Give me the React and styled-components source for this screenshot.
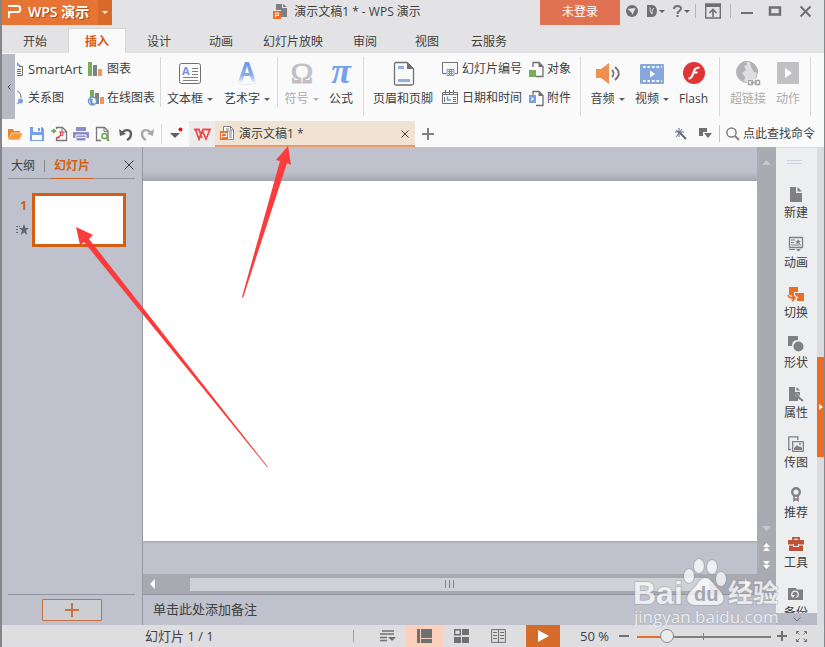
import React from "react";
import styled, { createGlobalStyle } from "styled-components";

const Global = createGlobalStyle`
  * { box-sizing: border-box; }
  body { margin: 0; background: #fafafa; overflow: hidden; }
  body, button, input { font-family: "Open Sans", "Noto Sans CJK SC", sans-serif; font-size: 12px; color: #404040; }
  button { border: 0; padding: 0; background: none; white-space: nowrap; line-height: 16px; cursor: pointer; }
  svg { display: block; flex: none; overflow: visible; }
`;

const Window = styled.div`
  position: relative;
  display: flex;
  flex-direction: column;
  height: 100vh;
  border-left: 2px solid #85868a;
  border-right: 1px solid #85868a;
  background: #fafafa;
  line-height: 16px;
`;

const Spacer = styled.div`
  flex: 1;
`;

const Divider = styled.span`
  flex: none;
  align-self: ${(p) => (p.$top ? "flex-start" : "center")};
  width: 1px;
  height: ${(p) => p.$h}px;
  margin: ${(p) => p.$m || "0"};
  background: ${(p) => p.$c || "#d9d9db"};
`;

/* Title bar */
const TitleBar = styled.header`
  display: flex;
  align-items: stretch;
  height: 25px;
  flex: none;
  background: #e3e3e5;
`;

const Brand = styled.button`
  display: flex;
  align-items: center;
  gap: 6px;
  width: 96px;
  padding: 0 0 2px 5px;
  background: #e67434;
  color: #fff;
  font-size: 14px;
  font-weight: 600;
  text-shadow: 1px 1px 0 #a9501c;
`;

const BrandMenu = styled.button`
  display: flex;
  align-items: center;
  justify-content: center;
  width: 14px;
  background: #da6a2c;
`;

const Caption = styled.h1`
  display: flex;
  flex: 1;
  align-items: center;
  justify-content: center;
  gap: 6px;
  margin: 0;
  padding: 0 0 2px 42px;
  font-size: 12px;
  font-weight: 400;
  white-space: nowrap;
`;

const Login = styled.button`
  width: 80px;
  padding-bottom: 2px;
  background: #e07153;
  color: #fff;
`;

const IconButton = styled.button`
  display: flex;
  flex: none;
  align-items: center;
  justify-content: center;
  gap: 2px;
  width: ${(p) => p.$w}px;
  height: ${(p) => p.$h || 22}px;
  background: ${(p) => p.$bg || "none"};
`;

/* Ribbon tabs */
const Tabs = styled.nav`
  display: flex;
  align-items: flex-end;
  height: 28px;
  flex: none;
  background: #e3e3e5;
`;

const Tab = styled.button`
  width: ${(p) => p.$w}px;
  height: 25px;
  padding-top: 2px;
  border: solid ${(p) => (p.$on ? "#d6d6d8" : "transparent")};
  border-width: 1px 1px 0;
  background: ${(p) => (p.$on ? "#fafafa" : "none")};
  color: ${(p) => (p.$on ? "#d8590f" : "#404040")};
  font-weight: ${(p) => (p.$on ? 700 : 400)};
`;

/* Ribbon */
const Ribbon = styled.div`
  display: flex;
  align-items: flex-start;
  height: 67px;
  flex: none;
  overflow: hidden;
`;

const RibbonScroll = styled.button`
  display: flex;
  align-items: center;
  justify-content: center;
  width: 13px;
  height: 65px;
  margin-top: 1px;
  background: #b7bac4;
`;

const Stack = styled.div`
  display: grid;
  grid-template-rows: 28px 30px;
  width: ${(p) => p.$w}px;
  flex: none;
  padding-top: 2px;
`;

const SmallTool = styled.button`
  display: flex;
  align-items: center;
  gap: ${(p) => p.$gap || 4}px;
  font-size: ${(p) => (p.$latin ? 13 : 12)}px;
`;

const BigTool = styled.button`
  display: flex;
  flex: none;
  flex-direction: column;
  align-items: center;
  gap: 4px;
  width: ${(p) => p.$w}px;
  padding-top: 8px;
  color: ${(p) => (p.disabled ? "#aaaaac" : "#404040")};
`;

const ToolLabel = styled.span`
  display: flex;
  align-items: center;
  gap: 4px;
`;

/* Quick access and document tabs */
const QuickBar = styled.div`
  display: flex;
  align-items: center;
  height: 27px;
  flex: none;
  padding-left: 1px;
`;

const HomeTab = styled(IconButton)`
  align-self: flex-end;
  height: 26px;
  background: #ececee;
`;

const DocTab = styled.div`
  display: flex;
  align-items: center;
  align-self: flex-end;
  width: 200px;
  height: 26px;
  padding: 1px 5px 0;
  border-bottom: 2px solid #e9986a;
  background: #f1e3d3;
`;

const DocName = styled.button`
  display: flex;
  flex: 1;
  align-items: center;
  gap: 4px;
`;

const Search = styled.button`
  display: flex;
  align-items: center;
  gap: 4px;
  padding: 0 9px 0 6px;
`;

/* Work area */
const Work = styled.main`
  display: flex;
  flex: 1;
  min-height: 0;
`;

const Outline = styled.aside`
  display: flex;
  flex-direction: column;
  width: 141px;
  flex: none;
  padding: 3px 7px 4px 6px;
  border-right: 1px solid #9698a2;
  background: #bfc2cc;
`;

const OutlineHead = styled.div`
  display: flex;
  align-items: stretch;
  height: 29px;
  flex: none;
  border-bottom: 1px solid #9395a0;
`;

const OutlineTab = styled.button`
  width: ${(p) => p.$w}px;
  padding-top: 4px;
  margin-bottom: -1px;
  border-bottom: 1px solid ${(p) => (p.$on ? "#d45f12" : "transparent")};
  color: ${(p) => (p.$on ? "#d45f12" : "#404040")};
  font-weight: ${(p) => (p.$on ? 700 : 400)};
`;

const SlideItem = styled.div`
  display: flex;
  flex: 1;
  align-items: flex-start;
  gap: 3px;
  padding: 14px 0 0 7px;
`;

const SlideMarks = styled.div`
  display: flex;
  flex-direction: column;
  align-items: flex-end;
  gap: 10px;
  width: 14px;
  padding: 5px 0 0;
  color: #d45f12;
  font-weight: 700;

  span { padding-right: 2px; }
`;

const Thumb = styled.button`
  width: 94px;
  height: 54px;
  border: 3px solid #d45f12;
  background: #fff;
`;

const OutlineFoot = styled.div`
  display: flex;
  justify-content: center;
  padding-top: 4px;
  border-top: 1px solid #9395a0;
`;

const AddSlide = styled.button`
  display: flex;
  align-items: center;
  justify-content: center;
  width: 60px;
  height: 22px;
  border: 1px solid #c87040;
  border-radius: 1px;
  background: #cdced2;
`;

const Editor = styled.section`
  display: flex;
  flex: 1;
  flex-direction: column;
  min-width: 0;
  background: #bfc2cc;
`;

const Stage = styled.div`
  display: flex;
  flex: 1;
  min-height: 0;
`;

const Canvas = styled.div`
  display: flex;
  flex: 1;
  padding: 34px 0 33px;
  background: linear-gradient(#bfc2cc 24px, #a6a8b0 34px, #bfc2cc 34px);
`;

const Slide = styled.div`
  flex: 1;
  background: #fff;
  box-shadow: 0 1px 2px #9b9da6;
`;

const VScroll = styled.div`
  display: flex;
  flex-direction: column;
  align-items: center;
  width: 19px;
  padding: 4px 0 0;
  background: #a9aab2;
`;

const HScroll = styled.div`
  display: flex;
  align-items: center;
  height: 21px;
  flex: none;
  padding-right: 19px;
  border-bottom: 1px solid #9395a0;
  background: #a9a9b1;
`;

const HThumb = styled.button`
  display: flex;
  align-items: center;
  justify-content: center;
  flex: 1;
  height: 13px;
  margin: 0 28px;
  background: #d0d1d5;
`;

const Notes = styled.button`
  height: 30px;
  flex: none;
  padding: 0 10px 3px;
  font-size: 13px;
  text-align: left;
`;

const TaskBar = styled.aside`
  display: flex;
  flex-direction: column;
  align-items: stretch;
  width: 41px;
  flex: none;
  background: #edeef0;
  border-top: 1px solid #dcdce0;
`;

const Grip = styled.div`
  width: 15px;
  height: 4px;
  margin: 12px auto 17px 11px;
  flex: none;
  border: solid #cfd2dc;
  border-width: 1px 0;
`;

const TaskList = styled.div`
  flex: 1;
  min-height: 0;
  overflow: hidden;
`;

const Task = styled.button`
  display: flex;
  flex-direction: column;
  align-items: center;
  gap: 3px;
  width: 100%;
  height: 50px;
  padding: 5px 1px 0 0;
`;

const TaskMore = styled.button`
  display: flex;
  align-items: center;
  justify-content: center;
  height: 12px;
  flex: none;
  background: #b7bac4;
`;

const Rail = styled.div`
  width: 7px;
  flex: none;
  padding-top: 210px;
  background: #dcdce0;
`;

const RailHandle = styled.button`
  display: flex;
  align-items: center;
  width: 7px;
  height: 100px;
  padding-left: 2px;
  background: #ea6d24;
`;

/* Status bar */
const StatusBar = styled.footer`
  display: flex;
  align-items: center;
  height: 22px;
  flex: none;
  padding: 0 12px 0 143px;
  background: #dedee0;
  font-size: 13px;
  white-space: nowrap;
`;

const ZoomValue = styled.span`
  width: 56px;
  padding-left: 20px;
`;

const Zoom = styled.input`
  appearance: none;
  width: 134px;
  height: 16px;
  margin: 0 3px 0 5px;
  background:
    linear-gradient(#808082, #808082) 66px 5px / 1px 7px no-repeat,
    linear-gradient(90deg, #ea6d24 24px, #808082 24px) 0 8px / 100% 2px no-repeat;

  &::-webkit-slider-thumb {
    appearance: none;
    width: 14px;
    height: 14px;
    border: 1px solid #88888a;
    border-radius: 50%;
    background: #ececee;
  }
`;

const Overlay = styled.svg`
  position: absolute;
  top: 0;
  left: -2px;
  pointer-events: none;
`;

const G = "#707072";

const Svg = ({ w = 16, h = w, children }) => (
  <svg width={w} height={h} viewBox={`0 0 ${w} ${h}`} fill="none" aria-hidden="true">{children}</svg>
);
const Caret = ({ c = "#606062", w = 6 }) => (
  <Svg w={w} h={3}><path d={`M0 0H${w}L${w / 2} 3Z`} fill={c} /></Svg>
);
const Cross = ({ s = 9, c = "#404040", t = 1 }) => (
  <Svg w={s}><path d={`M.5 .5L${s - 0.5} ${s - 0.5}M${s - 0.5} .5L.5 ${s - 0.5}`} stroke={c} strokeWidth={t} /></Svg>
);
const Plus = ({ s = 12, c = "#808082", t = 2 }) => (
  <Svg w={s}><path d={`M0 ${s / 2}H${s}M${s / 2} 0V${s}`} stroke={c} strokeWidth={t} /></Svg>
);
const DocIcon = () => (
  <Svg w={15} h={15}>
    <path d="M3.5 5V.5h7l3 3v10h-5" fill="#fff" stroke="#808082" />
    <path d="M10.5 0v4H14M6 3h3M6 5h6M9 7h3M9 9h3M9 11h3" stroke="#808082" />
    <path d="M0 5h8v9H0z" fill="#e67434" />
    <path d="M1.500 12V7.500h5v3h-4" stroke="#fff" />
  </Svg>
);

const tabs = [["开始", 66], ["插入", 58], ["设计", 66], ["动画", 58], ["幻灯片放映", 86], ["审阅", 58], ["视图", 66], ["云服务", 58]];

const Small = ({ icon, children, gap, latin }) => <SmallTool $gap={gap} $latin={latin}>{icon}{children}</SmallTool>;
const Big = ({ w, icon, label, menu, disabled }) => (
  <BigTool $w={w} disabled={disabled}>
    <Svg w={26}>{icon}</Svg>
    <ToolLabel>{label}{menu && <Caret c={disabled ? "#b0b0b2" : "#606062"} />}</ToolLabel>
  </BigTool>
);

const folded = <><path d="M4 5V.5h6l4 4v10H7" stroke={G} strokeWidth="1.3" /><path d="M9.500 0v5H14.500Z" fill={G} /></>;

const quick = [
  [23, "打开", <><path d="M1 14V3h5l1 2h6v3H5z" fill="#e8852b" /><path d="M4.500 7H16L12.500 14H1z" fill="#f79a3b" stroke="#fafafa" strokeWidth=".6" /></>],
  [22, "保存", <><path d="M1 1h12l2 2v12H1z" fill="#76a0ea" /><path d="M4 1h8v5H4zM3 9h10v5H3z" fill="#fafafa" /><path d="M9 2h2v3H9z" fill="#76a0ea" /></>],
  [22, "输出为PDF", <><path d="M5.500 3V1.500h6l4 4v9h-10V11" stroke="#77777a" strokeWidth="1.3" /><path d="M11 1v5h4.500" stroke="#77777a" /><path d="M0 5h4M2 3l2.500 2L2 7" stroke="#6aa84f" strokeWidth="1.600" /><path d="M8 6h2.500c2 0 2 3.500 0 3.500H9.500c-1 0-1.500 3-3 2.500 0-2 3-1.500 3-2.500V6" stroke="#dd3f3f" strokeWidth="1.200" /></>],
  [22, "打印", <><path d="M3 1h10v4H3zM0 6h16v6H0z" fill="#8d8dc9" /><path d="M3 9h10v6H3z" fill="#8d8dc9" stroke="#fafafa" /><path d="M4 11.500h8" stroke="#fafafa" /></>],
  [22, "打印预览", <><path d="M6 14.500H1.500v-13h8l3.500 3.500v9h-1" stroke="#77777a" strokeWidth="1.300" /><path d="M9 1v4.500h4" stroke="#77777a" /><circle cx="9.500" cy="10" r="2.600" stroke="#6aa84f" strokeWidth="1.500" /><path d="M11.500 12l2.500 3" stroke="#6aa84f" strokeWidth="1.800" /></>],
  [23, "撤消", <><path d="M4 7C7 3 13 3 13 8c0 3-2 5-4 6" stroke="#606062" strokeWidth="2.400" /><path d="M1 3l1 7 6-2z" fill="#606062" /></>],
  [22, "恢复", <><path d="M11 7C8 3 2 3 2 8c0 3 2 5 4 6" stroke="#a9a9ab" strokeWidth="2.400" /><path d="M14 3l-1 7-6-2z" fill="#a9a9ab" /></>],
];

const S = "#808082";
const tasks = [
  ["新建", <><path d="M2 1h6v6h6v9H2zM9.500 1l4.500 4.500H9.500z" fill={S} /></>],
  ["动画", <><path d="M1.500 1.500h13v10h-13z" stroke={S} strokeWidth="1.300" /><path d="M3 4h4M3 6.500h3M3 9h10M1 13.500h6" stroke={S} /><path d="M10 3l1 1.700 2 .2-1.500 1.300.5 2-2-1-1.800 1 .5-2L7.500 5l1.800-.3z" fill={S} /><path d="M8 13h5l-2.500 2.500z" fill={S} /></>],
  ["切换", <><path d="M1 1h9v5H6v3H1zM7 7h9v8H9v-3h2l-4-3z" fill="#ea6d24" /><path d="M0 9c1 3 3 3 6 3M4 9l3 3-3 3" stroke="#ea6d24" strokeWidth="1.800" /></>],
  ["形状", <><path d="M0 0h10v4c-4 0-6 2-6 6H0z" fill={S} /><circle cx="10.500" cy="10.500" r="5" fill={S} /></>],
  ["属性", <><path d="M1 1h6v5h5v3L9 7 7 9l3 3v3H1zM8.500 1L12 4.500H8.500z" fill={S} /><path d="M8 8l2 3 5 4" stroke={S} strokeWidth="2" /><path d="M8 8h3v3" stroke={S} /></>],
  ["传图", <><path d="M3 13.500H.800V.800h9V4" stroke={S} strokeWidth="1.300" /><path d="M4.700 5.700h10.600v9.600H4.700z" stroke={S} strokeWidth="1.300" /><path d="M6 14v-2l3-3 2 2 1-1 2 2v2z" fill={S} /><circle cx="12" cy="8" r="1" fill={S} /></>],
  ["推荐", <><circle cx="8" cy="6" r="3.800" stroke={S} strokeWidth="2.400" /><path d="M6 10v4.500l2-1.500 2 1.500V10" stroke={S} strokeWidth="1.600" /></>],
  ["工具", <><path d="M5 4V1.800h6V4" stroke="#bd5238" strokeWidth="1.800" /><path d="M0 4h16v4.500H0zM1 9.500h14V15H1z" fill="#bd5238" /><path d="M5 8h6v3H5z" fill="#edeef0" /><path d="M6 8h4v2H6z" fill="#bd5238" /></>],
  ["备份", <><path d="M0 2h8l1 1.500h6V14H0z" fill={S} /><path d="M4.500 10.500a3.300 3.300 0 1 1 3.500 1" stroke="#edeef0" strokeWidth="1.300" /><path d="M3 9h4l-2 3z" fill="#edeef0" /></>],
];

export default function App() {
  return (
    <Window>
      <Global />
      <TitleBar>
        <Brand>
          <Svg w={15} h={13}><path d="M1 1h10c3 0 3 6 0 6H1M2 6v7" stroke="#fff" strokeWidth="2" /></Svg>
          WPS 演示
        </Brand>
        <BrandMenu aria-label="菜单"><Caret c="#fff" /></BrandMenu>
        <Caption>
          <Svg w={15} h={15}>
            <path d="M3 0h6v4h5v9H8V6H3zM10 0l4 3h-4z" fill={S} />
            <path d="M0 7h8v8H0z" fill="#ea6d24" /><path d="M2.500 13.500V9h3v2.500h-3" stroke="#fff" />
          </Svg>
          演示文稿1 * - WPS 演示
        </Caption>
        <Login>未登录</Login>
        <IconButton $w={24} aria-label="在线服务"><Svg w={12}><circle cx="6" cy="6" r="6" fill={G} /><path d="M1.500 3.500C4 4.500 5 2.500 10 3.500 8 5 8 8 6 10 6.500 7 4 7 1.500 3.500z" fill="#e3e3e5" /></Svg></IconButton>
        <IconButton $w={24} aria-label="皮肤"><Svg w={10} h={12}><path d="M0 0h5c6.500 0 6.500 12 0 12H0z" fill={G} /><path d="M3 2.500c0 3 .5 5 2 6.500 0-3 .5-5 2-6" stroke="#e3e3e5" /></Svg><Caret /></IconButton>
        <IconButton $w={26} aria-label="帮助"><Svg w={9} h={12}><path d="M1 4c0-4 7-4 7-.5C8 6 4.500 5.500 4.500 9M4.500 10v2" stroke={G} strokeWidth="2" /></Svg><Caret /></IconButton>
        <Divider $h={14} $c="#b5b5b7" $m="0 0 3px 1px" />
        <IconButton $w={34} aria-label="隐藏功能区"><Svg w={16}><path d="M.700 1h14.600v14H.700z" stroke={G} strokeWidth="1.400" /><path d="M0 1h16v3H0z" fill={G} /><path d="M8 14V7M4.500 10L8 6.500l3.500 3.500" stroke={G} strokeWidth="1.600" /></Svg></IconButton>
        <Divider $h={14} $c="#b5b5b7" $m="0 0 3px" />
        <IconButton $w={32} aria-label="最小化"><Svg w={12}><path d="M0 8h12" stroke={G} strokeWidth="2" /></Svg></IconButton>
        <IconButton $w={24} aria-label="最大化"><Svg w={12} h={10}><path d="M1 1.500h10v7H1z" stroke={G} strokeWidth="2.500" /></Svg></IconButton>
        <IconButton $w={37} aria-label="关闭"><Cross s={11} c={G} t={2} /></IconButton>
      </TitleBar>

      <Tabs>{tabs.map(([t, w]) => <Tab key={t} $w={w} $on={t === "插入"}>{t}</Tab>)}</Tabs>

      <Ribbon>
        <RibbonScroll aria-label="向左滚动"><Svg w={4} h={6}><path d="M3.500 .5L1 3l2.500 2.500" stroke="#505058" /></Svg></RibbonScroll>
        <Stack $w={73}>
          <Small latin icon={<Svg w={9} h={14}><path d="M4 4.500h3.500v9H2M2 7.500h4M2 9.500h4M2 11.500h4" stroke={G} /><path d="M2 0l4 4H2z" fill="#76a0ea" /></Svg>}>SmartArt</Small>
          <Small icon={<Svg w={9} h={14}><path d="M2 0c3 1 4 4 4 7M2 13l3-2" stroke={G} /><circle cx="5.500" cy="10" r="2.500" fill="#76a0ea" /></Svg>}>关系图</Small>
        </Stack>
        <Stack $w={72}>
          <Small gap={3} icon={<Svg w={16} h={14}><path d="M0 0h4v14H0z" fill="#78ab5e" /><path d="M5 3h4v11H5z" fill={S} /><path d="M10 7h4v7h-4z" fill="#ee9560" /></Svg>}>图表</Small>
          <Small gap={3} icon={<Svg w={16} h={16}><path d="M2 0h4v7H2z" fill="#78ab5e" /><path d="M7 3h4v11H7z" fill={S} /><path d="M12 7h4v7h-4z" fill="#ee9560" /><circle cx="4.500" cy="11" r="4" fill="#fff" stroke="#6d96cf" strokeWidth="1.400" /><path d="M1 8l4 1-1 3 3 2-4 1z" fill="#6d96cf" /></Svg>}>在线图表</Small>
        </Stack>
        <Divider $top $h={50} $m="4px 0 0" />
        <Big w={58} menu label="文本框" icon={<><rect x="2.500" y="2.500" width="21" height="20" rx="2" stroke={G} /><text x="5" y="14" fontFamily="Open Sans" fontWeight="700" fontSize="11" fill="#6d96dc">A</text><path d="M15 7.500h6M15 10.500h6M15 13.500h6M6 16.500h15M6 19.500h15" stroke={S} /></>} />
        <Big w={56} menu label="艺术字" icon={<><defs><linearGradient id="fade" x2="0" y2="1"><stop stopColor="#6f99e6" /><stop offset=".65" stopColor="#86abee" /><stop offset="1" stopColor="#e9effb" /></linearGradient></defs><path d="M4 21L11 1h4l7 20h-4l-2-6h-6l-2 6zM11 12h4l-2-7z" fill="url(#fade)" /><path d="M4 22c3 2 15 2 18 0" stroke="#e3ebf9" /></>} />
        <Divider $top $h={50} $m="4px 0 0 2px" />
        <Big w={47} menu disabled label="符号" icon={<text x="13" y="22" textAnchor="middle" fontFamily="Liberation Serif" fontSize="30" fill="#c1c1c3" stroke="#c1c1c3">Ω</text>} />
        <Big w={32} label="公式" icon={<text x="13" y="22" textAnchor="middle" fontFamily="Liberation Serif" fontSize="36" fontWeight="700" fontStyle="italic" fill="#76a0ea">π</text>} />
        <Divider $top $h={59} $m="4px 0 0 6px" />
        <Big w={78} label="页眉和页脚" icon={<><path d="M6 1.500h11l6.500 6.500v14.500c0 1-1 1.500-2 1.500H6c-1 0-1.500-1-1.500-1.500V3c0-1 .500-1.500 1.500-1.500z" stroke={G} strokeWidth="1.300" /><path d="M17 1v7h7z" fill={G} /><path d="M8 5h6v3H8zM8 18h12v3H8z" fill="#8fb0e6" /></>} />
        <Stack $w={87}>
          <Small icon={<Svg w={16}><path d="M4 12.500H.5v-11h15v11H13" stroke={G} /><path d="M5 8.500h7v6H5zM6 10.500h5M6 12.500h5M7.500 9v5M9.500 9v5" stroke="#6d96dc" /></Svg>}>幻灯片编号</Small>
          <Small icon={<Svg w={16}><path d="M.5 2.500h15v11H.5zM0 4.500h16" stroke={G} /><path d="M3.500 0v4M7.500 0v4M11.500 0v4M11 7.500h3M11 9.500h3M11 11.500h3M2.500 7v5" stroke={G} /><path d="M5.500 6.500V10H9" stroke="#6d96dc" strokeWidth="1.500" /></Svg>}>日期和时间</Small>
        </Stack>
        <Stack $w={51}>
          <Small gap={3} icon={<Svg w={15}>{folded}<path d="M0 8h7v7H0z" fill="#78ab5e" /></Svg>}>对象</Small>
          <Small gap={3} icon={<Svg w={15}>{folded}<path d="M0 4h7v8H0z" fill="#76a0ea" /><path d="M2.500 6v4L5 8z" fill="#fff" /></Svg>}>附件</Small>
        </Stack>
        <Divider $top $h={59} $m="4px 0 0" />
        <Big w={53} menu label="音频" icon={<><path d="M1 8h5l8-6v21l-8-6H1z" fill="#f09050" /><path d="M17 9c2 2 2 5 0 7M20 6c5 4 5 9 0 13" stroke={G} strokeWidth="1.800" /></>} />
        <Big w={36} menu label="视频" icon={<><rect x="1" y="3" width="24" height="20" rx="1" fill="#86a8dc" /><path d="M4 6h19M4 20h19" stroke="#fff" strokeWidth="2" strokeDasharray="2.500 2" /><path d="M11 9.500v7l5-3.500z" fill="#fff" /></>} />
        <Big w={47} label="Flash" icon={<><circle cx="13" cy="12" r="11" fill="#e03535" /><path d="M18.500 6.500c-5 0-5 3-6.500 6.500S10 17.500 7.500 17.500M12 11.500h4.500" stroke="#fff" strokeWidth="2.200" /></>} />
        <Divider $top $h={59} $m="4px 0 0 2px" />
        <Big w={56} disabled label="超链接" icon={<><circle cx="12" cy="11" r="10.500" fill="#dedee0" stroke="#b2b2b4" /><path d="M2 8c2-5 6-8 9-8l1 4-3 1 2 4-4 3 3 4-1 4C4 19 1 14 2 8zM15 1c5 1 8 6 8 11l-4-1-3-5z" fill="#b2b2b4" /><path d="M12 18h14v7H12z" fill="#fafafa" /><path d="M13.500 19.500h4v4h-4zM20.500 19.500h4v4h-4zM16 21.500h6" stroke="#a5a5a7" strokeWidth="1.400" /></>} />
        <Big w={24} disabled label="动作" icon={<><rect x="2" y="1" width="22" height="22" rx="1" fill="#c1c1c3" /><path d="M10 7v10l7-5z" fill="#fff" /></>} />
        <Divider $top $h={59} $m="4px 0 0 10px" />
      </Ribbon>

      <QuickBar>
        {quick.map(([w, label, icon]) => <IconButton key={label} $w={w} aria-label={label}><Svg w={16}>{icon}</Svg></IconButton>)}
        <Divider $h={20} $m="0 0 0 2px" />
        <IconButton $w={27} aria-label="自定义快速访问工具栏"><Svg w={14} h={14}><path d="M1 6h10l-5 5z" fill="#606062" /><circle cx="11.500" cy="2.500" r="2" fill="#f01010" /></Svg></IconButton>
        <HomeTab $w={26} aria-label="首页"><Svg w={17} h={13}><path d="M0 1.500h5L8 10M1.500 1.500L5 11 9 1.500h7L12 11 8.500 3" stroke="#ee4a4a" strokeWidth="1.800" /></Svg></HomeTab>
        <DocTab>
          <DocName><DocIcon />演示文稿1 *</DocName>
          <IconButton $w={11} aria-label="关闭文稿"><Cross s={8} /></IconButton>
        </DocTab>
        <IconButton $w={26} aria-label="新建文稿"><Plus /></IconButton>
        <Spacer />
        <IconButton $w={24} aria-label="魔法棒"><Svg w={13} h={13}><path d="M6 6l6 6" stroke="#606878" strokeWidth="2" /><path d="M5 1v9M2 3l7 5M8 2L2 10M1 5h9" stroke="#606878" /></Svg></IconButton>
        <IconButton $w={25} aria-label="窗口"><Svg w={13} h={11}><path d="M0 0h8v4H4v4H0z" fill={G} /><path d="M5 5h8L9 10z" fill={G} /></Svg></IconButton>
        <Divider $h={17} $m="0 0 0 1px" $c="#c5c5c7" />
        <Search><Svg w={13}><circle cx="5.500" cy="5.500" r="4.600" stroke={S} strokeWidth="1.500" /><path d="M9 9l4 4" stroke={S} strokeWidth="2" /></Svg>点此查找命令</Search>
      </QuickBar>

      <Work>
        <Outline>
          <OutlineHead>
            <OutlineTab $w={30}>大纲</OutlineTab>
            <Divider $h={12} $c="#85878f" $m="4px 6px 0" />
            <OutlineTab $w={42} $on>幻灯片</OutlineTab>
            <Spacer />
            <IconButton $w={12} $h={30} aria-label="关闭窗格"><Cross s={10} /></IconButton>
          </OutlineHead>
          <SlideItem>
            <SlideMarks>
              <span>1</span>
              <Svg w={13} h={12}><path d="M0 2.500h4M0 5.500h3M0 8.500h3" stroke="#606878" strokeDasharray="2 1" /><path d="M8 0l1.500 4H13l-3 2.500 1.300 4.500L8 8.500 4.700 11 6 6.500 3 4h3.500z" fill="#606878" /></Svg>
            </SlideMarks>
            <Thumb aria-label="幻灯片 1" />
          </SlideItem>
          <OutlineFoot><AddSlide aria-label="新建幻灯片"><Plus s={14} c="#c87040" /></AddSlide></OutlineFoot>
        </Outline>

        <Editor>
          <Stage>
            <Canvas><Slide /></Canvas>
            <VScroll>
              <IconButton $w={19} $h={22} aria-label="向上"><Svg w={9} h={5}><path d="M0 5l4.500-5L9 5z" fill="#c8c8ca" /></Svg></IconButton>
              <Spacer />
              <IconButton $w={19} $h={18} aria-label="向下"><Svg w={9} h={5}><path d="M0 0h9L4.500 5z" fill="#c8c8ca" /></Svg></IconButton>
              <IconButton $w={19} $h={19} aria-label="上一张"><Svg w={7} h={8}><path d="M0 4l3.500-4L7 4zM0 8l3.500-4L7 8z" fill="#fff" /></Svg></IconButton>
              <IconButton $w={19} $h={18} aria-label="下一张"><Svg w={7} h={8}><path d="M0 0h7L3.500 4zM0 4h7L3.500 8z" fill="#fff" /></Svg></IconButton>
            </VScroll>
          </Stage>
          <HScroll>
            <IconButton $w={19} $h={20} aria-label="向左"><Svg w={5} h={10}><path d="M5 0v10L0 5z" fill="#fff" /></Svg></IconButton>
            <HThumb aria-label="水平滚动"><Svg w={10} h={8}><path d="M.5 0v8M4.500 0v8M8.500 0v8" stroke={S} /></Svg></HThumb>
            <IconButton $w={20} $h={20} aria-label="向右"><Svg w={5} h={10}><path d="M0 0v10l5-5z" fill="#fff" /></Svg></IconButton>
          </HScroll>
          <Notes>单击此处添加备注</Notes>
        </Editor>

        <TaskBar>
          <Grip />
          <TaskList>{tasks.map(([t, icon]) => <Task key={t}><Svg w={16}>{icon}</Svg>{t}</Task>)}</TaskList>
          <TaskMore aria-label="更多"><Svg w={8} h={5}><path d="M.5 .5L4 4l3.500-3.500" stroke={G} /></Svg></TaskMore>
        </TaskBar>
        <Rail><RailHandle aria-label="展开任务窗格"><Svg w={4} h={6}><path d="M0 0v6l4-3z" fill="#fff" /></Svg></RailHandle></Rail>
      </Work>

      <StatusBar>
        <span>幻灯片 1 / 1</span>
        <Spacer />
        <Divider $h={12} $c="#a0a0a2" $m="0 15px 0 0" />
        <IconButton $w={37} aria-label="备注"><Svg w={16} h={12}><path d="M2 1h12M0 4h14M0 7.500h7M0 10.500h7" stroke={G} strokeWidth="1.300" /><path d="M8 7h8l-4 4z" fill={G} /></Svg></IconButton>
        <IconButton $w={37} $bg="#fbd0bd" aria-label="普通视图"><Svg w={15} h={14}><path d="M0 0h3v14H0zM4 0h11v9H4zM4 10h11v4H4z" fill={G} /></Svg></IconButton>
        <IconButton $w={37} aria-label="幻灯片浏览"><Svg w={15} h={14}><path d="M.700 .700h5.600v5H.700z" stroke={G} strokeWidth="1.400" /><path d="M8 0h7v6H8zM0 8h7v6H0zM8 8h7v6H8z" fill={G} /></Svg></IconButton>
        <IconButton $w={37} aria-label="阅读视图"><Svg w={15} h={14}><path d="M.600 .600h13.800v12.800H.600zM7.500 0v14M2 3.500h4M2 6.500h4M2 9.500h4M9 3.500h4M9 6.500h4M9 9.500h4" stroke={G} /></Svg></IconButton>
        <Divider $h={0} $m="0 8px 0 0" />
        <IconButton $w={34} $bg="#d66b2a" aria-label="放映"><Svg w={11} h={12}><path d="M0 0v12l11-6z" fill="#fff" /></Svg></IconButton>
        <ZoomValue>50 %</ZoomValue>
        <IconButton $w={16} aria-label="缩小"><Svg w={10} h={2}><path d="M0 0h10v2H0z" fill={G} /></Svg></IconButton>
        <Zoom type="range" defaultValue={19} aria-label="显示比例" />
        <IconButton $w={16} aria-label="放大"><Plus s={10} c={G} /></IconButton>
        <IconButton $w={22} aria-label="适应窗口"><Svg w={11}><path d="M.5 3V.5H3M8 .5h2.500V3M10.500 8v2.500H8M3 10.500H.5V8M1 1l2.500 2.500M10 1L7.500 3.500M10 10L7.500 7.500M1 10l2.500-2.500" stroke={G} /></Svg></IconButton>
      </StatusBar>

      <Overlay width="825" height="647" viewBox="0 0 825 647" aria-hidden="true">
        <g fill="#fc3c3c">
          <path d="M288 146L291 165L287 163L243 298L242 297L280 161L276 160Z" />
          <path d="M76 227L93 235L89 239L268 467L267 467L84 242L80 245Z" />
        </g>
        <g fill="#fff" fillOpacity=".75" stroke="#8d8f99" strokeOpacity=".35" strokeWidth="2" paintOrder="stroke">
          <text x="633" y="604" fontFamily="Liberation Sans" fontSize="32" fontWeight="700">Bai</text>
          <ellipse cx="689" cy="576" rx="5" ry="7" /><ellipse cx="699" cy="566" rx="5" ry="7" />
          <ellipse cx="712" cy="567" rx="5" ry="7" /><ellipse cx="721" cy="579" rx="5" ry="7" />
          <path d="M705 578c6 0 8 6 13 11 8 7 7 15-1 16-8 0-16 0-23 0-8-1-9-9-2-15 6-5 7-12 13-12z" />
          <text x="728" y="602" fontFamily="Noto Sans CJK SC" fontSize="25" fontWeight="700">经验</text>
          <text x="634" y="623" fontFamily="Open Sans" fontSize="17" strokeWidth="1">jingyan.baidu.com</text>
        </g>
        <text x="694" y="601" fontFamily="Liberation Sans" fontSize="20" fontWeight="700" fill="#a5a6ae">du</text>
      </Overlay>
    </Window>
  );
}
